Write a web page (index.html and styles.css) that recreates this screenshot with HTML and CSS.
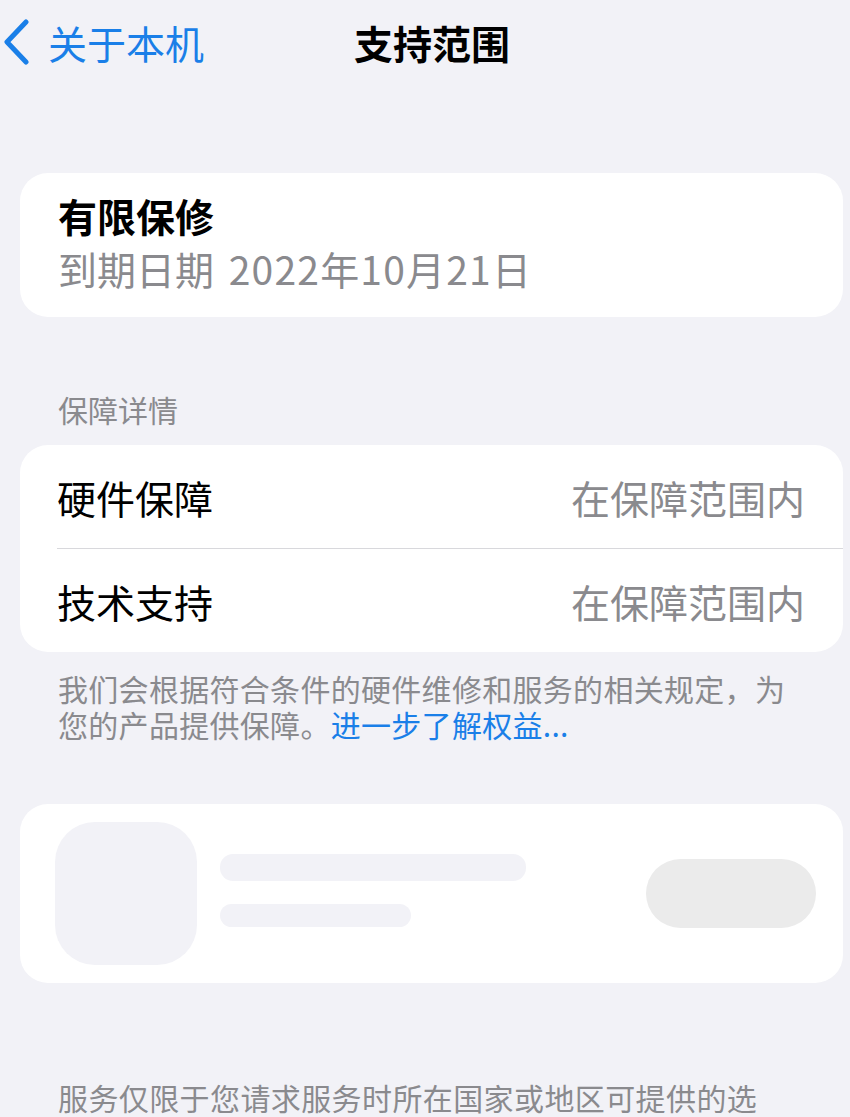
FILE: index.html
```html
<!DOCTYPE html>
<html lang="zh-CN">
<head>
    <meta charset="UTF-8">
    <meta name="viewport" content="width=device-width, initial-scale=1.0">
    <title>支持范围</title>
    <link rel="stylesheet" href="styles.css">
</head>
<body>
    <div class="nav-bar">
        <a class="nav-back" href="#">
            <svg class="chevron" width="28" height="46" viewBox="0 0 28 46">
                <path d="M24 3 L5 23 L24 43" fill="none" stroke="#1a7fe8" stroke-width="5" stroke-linecap="round" stroke-linejoin="round"/>
            </svg>
            <span>关于本机</span>
        </a>
        <h1 class="nav-title">支持范围</h1>
        <div></div>
    </div>

    <section class="card warranty-card">
        <p class="warranty-title">有限保修</p>
        <p class="warranty-date">到期日期 <span class="date-value">2022年10月21日</span></p>
    </section>

    <p class="section-header">保障详情</p>
    <section class="card list-card">
        <div class="list-row">
            <span class="row-label">硬件保障</span>
            <span class="row-value">在保障范围内</span>
        </div>
        <div class="list-row">
            <span class="row-label">技术支持</span>
            <span class="row-value">在保障范围内</span>
        </div>
    </section>
    <div class="section-footer">
        <p>我们会根据符合条件的硬件维修和服务的相关规定，为</p>
        <p>您的产品提供保障。<a href="#">进一步了解权益...</a></p>
    </div>

    <section class="card skeleton-card">
        <div class="skeleton-icon"></div>
        <div class="skeleton-lines">
            <div class="skeleton-line long"></div>
            <div class="skeleton-line short"></div>
        </div>
        <div class="skeleton-button"></div>
    </section>

    <p class="bottom-note">服务仅限于您请求服务时所在国家或地区可提供的选</p>
</body>
</html>
```

FILE: styles.css
```css
body{
    margin: 0;
    background: #f2f2f7;
    font-family: "Noto Sans CJK SC", "Noto Sans", sans-serif;
    color: #000;
    overflow: hidden;
}
p{
    margin: 0;
}
.nav-bar{
    display: grid;
    grid-template-columns: 1fr auto 1fr;
    align-items: center;
    height: 80px;
    padding-top: 2px;
}
.nav-back{
    display: flex;
    align-items: center;
    gap: 18px;
    padding-left: 2px;
    color: #1a7fe8;
    text-decoration: none;
    font-size: 39px;
    line-height: 80px;
}
.nav-title{
    margin: 0;
    padding-left: 14px;
    font-size: 39px;
    font-weight: bold;
    line-height: 80px;
}
.card{
    background: #fff;
    margin: 0 7px 0 20px;
    border-radius: 28px;
}
.warranty-card{
    margin-top: 91px;
    padding: 16px 38px 22px;
}
.warranty-title{
    font-size: 39px;
    font-weight: bold;
    line-height: 53px;
}
.warranty-date{
    font-size: 39px;
    line-height: 53px;
    color: #8a8a8e;
}
.date-value{
    margin-left: 6px;
    letter-spacing: 1.2px;
}
.section-header{
    margin: 74px 0 0 58px;
    font-size: 30px;
    line-height: 36px;
    color: #8a8a8e;
}
.list-card{
    margin-top: 18px;
    padding-left: 37px;
}
.list-row{
    display: flex;
    justify-content: space-between;
    align-items: center;
    height: 103px;
    padding-right: 38px;
    font-size: 39px;
}
.list-row + .list-row{
    border-top: 1px solid #d8d8dc;
}
.row-value{
    color: #8a8a8e;
}
.section-footer{
    margin: 18px 0 0 58px;
    font-size: 30px;
    line-height: 36px;
    letter-spacing: 0.3px;
    color: #8a8a8e;
}
.section-footer a{
    color: #1a7fe8;
    text-decoration: none;
}
.skeleton-card{
    display: flex;
    align-items: center;
    margin-top: 62px;
    height: 179px;
    padding: 0 27px 0 35px;
}
.skeleton-icon{
    width: 142px;
    height: 143px;
    border-radius: 40px;
    background: #f2f2f7;
}
.skeleton-lines{
    display: flex;
    flex-direction: column;
    gap: 23px;
    margin: 0 0 6px 23px;
    flex: 1;
}
.skeleton-line{
    height: 27px;
    border-radius: 13px;
    background: #f2f2f7;
}
.skeleton-line.long{
    width: 306px;
}
.skeleton-line.short{
    width: 191px;
    height: 23px;
}
.skeleton-button{
    width: 170px;
    height: 69px;
    border-radius: 35px;
    background: #ebebeb;
    margin-bottom: 1px;
}
.bottom-note{
    margin: 96px 0 0 58px;
    font-size: 30px;
    line-height: 36px;
    letter-spacing: 0.4px;
    color: #8a8a8e;
    white-space: nowrap;
}
```
